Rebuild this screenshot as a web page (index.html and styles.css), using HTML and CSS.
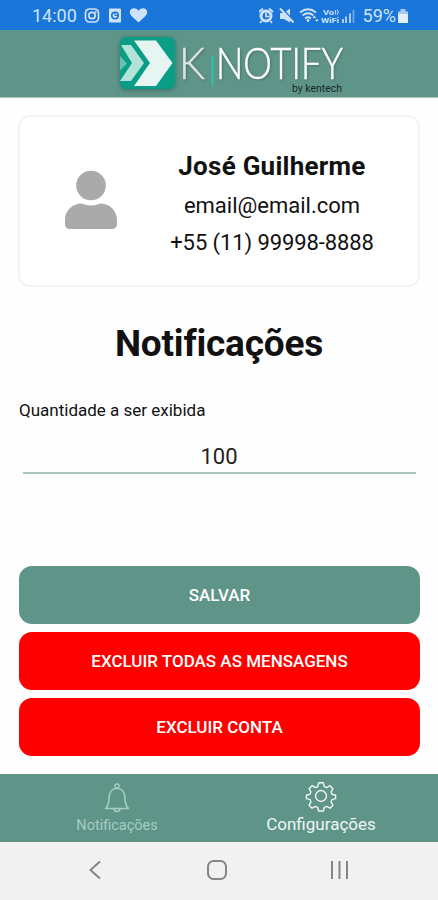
FILE: index.html
```
<!DOCTYPE html>
<html lang="pt-BR">
<head>
    <meta charset="utf-8">
    <title>K|Notify</title>
    <link rel="stylesheet" href="styles.css">
</head>
<body>
    <div class="status-bar">
        <span class="clock">14:00</span>
        <svg class="status-left" width="64" height="18" viewBox="0 0 64 18">
            <g fill="none" stroke="#cfe2fa" stroke-width="1.7">
                <rect x="1.5" y="2" width="13" height="13" rx="4"/>
                <circle cx="8" cy="8.5" r="3.2"/>
            </g>
            <circle cx="11.8" cy="4.8" r="1" fill="#cfe2fa"/>
            <rect x="25" y="1.5" width="12" height="14" rx="1" fill="#cfe2fa"/>
            <circle cx="31" cy="8.5" r="3.2" fill="none" stroke="#1976d8" stroke-width="1.6"/>
            <path d="M31 8.5V5.5M31 8.5h3" stroke="#1976d8" stroke-width="1.2"/>
            <path d="M54.500 15.500L47.500 9C44 5 46.500 1.200 50 1.200c2.200 0 3.500 1 4.500 2.600 1-1.600 2.300-2.600 4.500-2.600 3.500 0 6 3.800 2.500 7.800z" fill="#cfe2fa"/>
        </svg>
        <svg class="status-right" width="98" height="18" viewBox="0 0 98 18">
            <circle cx="7" cy="9" r="5" fill="none" stroke="#cfe2fa" stroke-width="3"/>
            <path d="M0 5l4-3.500M14 5l-4-3.500M2.500 14L1 16M11.500 14l1.500 2M7 6v3.500h3" fill="none" stroke="#cfe2fa" stroke-width="1.7"/>
            <path d="M21 6h4l6-4.500v14L25 12h-4z" fill="#cfe2fa"/>
            <path d="M22 .5l13 14" stroke="#1976d8" stroke-width="2"/>
            <path d="M21 1.500l13.500 14" stroke="#cfe2fa" stroke-width="2"/>
            <g fill="none" stroke="#cfe2fa" stroke-width="1.7">
                <path d="M41 5.500q8-6.500 16 0M43.500 8.500q5.500-4.500 11 0M46 11.500q3-2.500 6 0"/>
            </g>
            <circle cx="49" cy="13.500" r="1.400" fill="#cfe2fa"/>
            <path d="M53.500 11l1.800-2.500 1.800 2.500zM56 12.500h3.600L57.800 15z" fill="#cfe2fa"/>
            <text class="vo-text" x="64" y="8" textLength="11" lengthAdjust="spacingAndGlyphs">Vo</text>
            <path d="M76 3q1.500 2 0 4.500M78.200 2.500q2 2.500 0 5.500" fill="none" stroke="#cfe2fa"/>
            <text class="vo-text" x="62" y="15.500" textLength="18" lengthAdjust="spacingAndGlyphs">WiFi</text>
            <g fill="#a9caf2">
                <rect x="83" y="12" width="2" height="4"/>
                <rect x="86" y="9.500" width="2" height="6.500"/>
                <rect x="90" y="6.500" width="2" height="9.500"/>
            </g>
            <path d="M94.500 3v13" stroke="#6fa8ea" stroke-width="1.8"/>
        </svg>
        <span class="battery">59%</span>
        <svg width="12" height="18" viewBox="0 0 12 18">
            <path d="M3.500 2h5v2.500H11V15q0 1-1 1H2q-1 0-1-1V4.500h2.500z" fill="#a9caf2"/>
            <path d="M1 7h10v8q0 1-1 1H2q-1 0-1-1z" fill="#e4effc"/>
        </svg>
    </div>

    <div class="header">
        <svg class="logo" width="238" height="66" viewBox="0 0 238 66">
            <defs>
                <clipPath id="mark"><rect x="10" y="7" width="55" height="52" rx="6"/></clipPath>
            </defs>
            <rect class="logo-mark" x="10" y="7" width="55" height="52" rx="6"/>
            <g clip-path="url(#mark)">
                <path d="M10 26l7 7.500-7 7z" fill="#66c3b0"/>
                <path d="M11 15h10l13 18-13 18H10l12-18z" fill="#b3e2d9"/>
                <path d="M24 10.500h22l16.500 22.500L46 56H24l16-23z" fill="#e6f5f2"/>
            </g>
            <text class="logo-k" x="69" y="49" textLength="26" lengthAdjust="spacingAndGlyphs">K</text>
            <rect x="101.500" y="26" width="2" height="29" fill="#2fc4ab"/>
            <text class="logo-text" x="106" y="49" textLength="127" lengthAdjust="spacingAndGlyphs">NOTIFY</text>
            <text class="logo-by" x="182" y="62" textLength="50" lengthAdjust="spacingAndGlyphs">by kentech</text>
        </svg>
    </div>

    <div class="content">
        <div class="user-card">
            <svg class="avatar" width="52" height="60" viewBox="0 0 52 60">
                <circle cx="26" cy="15.500" r="14.800"/>
                <path d="M0 54V50C0 40 8 33.500 16.500 33.500q9.500 4 19 0C44 33.500 52 40 52 50v4q0 5-5 5H5q-5 0-5-5z"/>
            </svg>
            <div class="user-info">
                <div class="user-name">José Guilherme</div>
                <div class="user-email">email@email.com</div>
                <div class="user-phone">+55 (11) 99998-8888</div>
            </div>
        </div>

        <h1>Notificações</h1>

        <label for="quantity">Quantidade a ser exibida</label>
        <input id="quantity" class="quantity" type="text" value="100">

        <div class="buttons">
            <button class="btn save">SALVAR</button>
            <button class="btn delete">EXCLUIR TODAS AS MENSAGENS</button>
            <button class="btn delete">EXCLUIR CONTA</button>
        </div>
    </div>

    <div class="tabs">
        <div class="tab tab-notifications">
            <svg width="30" height="32" viewBox="0 0 30 32">
                <circle cx="15" cy="4" r="2"/>
                <path d="M3.500 26.500c3-3 3.500-5 3.500-10C7 10 9.500 6.500 15 6.500S23 10 23 16.500c0 5 .5 7 3.500 10zM12 26.500c0 4 6 4 6 0"/>
            </svg>
            <span>Notificações</span>
        </div>
        <div class="tab tab-settings">
            <svg width="32" height="32" viewBox="-1 -1 34 34">
                <circle cx="16" cy="16" r="5.800"/>
                <path d="M13.500 2h5l1 4 2.500 1 3.500-2 3.200 3.200-2 3.600 1 2.400 3.800 1v3.600l-3.800 1-1 2.400 2 3.600-3.200 3.200-3.500-2-2.500 1-1 4h-5l-1-4-2.500-1-3.500 2-3.200-3.200 2-3.600-1-2.400-3.800-1v-3.600l3.800-1 1-2.400-2-3.600L6.500 5 10 7l2.500-1z"/>
            </svg>
            <span>Configurações</span>
        </div>
    </div>

    <div class="system-nav">
        <svg width="438" height="58" viewBox="0 0 438 58">
            <path d="M100 19.500l-9.500 8.500 9.500 8.500"/>
            <rect x="208" y="19" width="18" height="18" rx="5.500"/>
            <path d="M332 19v18M339.500 19v18M347 19v18"/>
        </svg>
    </div>
</body>
</html>
```
FILE: styles.css
```
* {
    box-sizing: border-box;
}

body {
    margin: 0;
    height: 900px;
    display: flex;
    flex-direction: column;
    overflow: hidden;
    background: #fefefe;
    color: #111;
    font-family: Roboto, sans-serif;
}

.status-bar {
    display: flex;
    align-items: center;
    height: 30px;
    padding: 1px 29px 0 32px;
    background: #1976d8;
    color: #cfe2fa;
    font-size: 18px;
}

.status-left {
    margin-left: 7px;
}

.status-right {
    margin-left: auto;
    margin-right: 6px;
}

.battery {
    margin-right: 1px;
}

.vo-text {
    fill: #cfe2fa;
    font-size: 8px;
    font-weight: bold;
}

.header {
    display: flex;
    justify-content: center;
    height: 68px;
    padding-left: 20px;
    background: #5f9489;
    border-bottom: 1px solid #a9c3bd;
}

.logo {
    overflow: visible;
}

.logo-mark {
    fill: #0b9e86;
    filter: drop-shadow(0 1px 2px #3d6b62);
}

.logo-k, .logo-text {
    font-family: Lato, sans-serif;
    font-weight: 300;
    font-size: 44px;
    fill: #fff;
    stroke: #fff;
    stroke-width: 0.5;
    filter: drop-shadow(1px 1px 1px #48756c);
}

.logo-k {
    fill: #e1e3e2;
    stroke: #e1e3e2;
}

.logo-by {
    font-size: 10.5px;
    fill: #142b26;
}

.content {
    flex: 1;
    padding: 17px 18px 0;
}

.user-card {
    display: flex;
    height: 172px;
    padding: 0 46px;
    border: 2px solid #f3f3f3;
    border-radius: 12px;
    background: #fff;
}

.avatar {
    flex: none;
    margin-top: 53px;
    margin-left: -1px;
    fill: #aaa;
}

.user-info {
    flex: none;
    width: 204px;
    margin: 29px 0 0 53px;
    display: flex;
    flex-direction: column;
    align-items: center;
    white-space: nowrap;
}

.user-name {
    font-size: 26px;
    font-weight: bold;
    letter-spacing: 0.25px;
    line-height: 40px;
}

.user-email, .user-phone {
    font-size: 22px;
    line-height: 37px;
}

.user-email {
    padding-top: 1px;
}

.user-phone {
    letter-spacing: -0.1px;
}

h1 {
    margin: 34px 0 0;
    font-size: 37px;
    letter-spacing: -0.2px;
    line-height: 46px;
    text-align: center;
}

label {
    display: block;
    margin: 32px 0 0 1px;
    font-size: 17px;
    line-height: 22px;
}

.quantity {
    display: block;
    width: 393px;
    height: 36px;
    margin: 17px auto 0;
    padding: 2px 0 0;
    border: 0;
    border-bottom: 2px solid #a9c5be;
    background: none;
    color: #222;
    font-family: inherit;
    font-size: 22px;
    text-align: center;
    outline: none;
}

.buttons {
    display: flex;
    flex-direction: column;
    gap: 8px;
    margin: 92px 0 0 1px;
}

.btn {
    height: 58px;
    border: 0;
    border-radius: 13px;
    color: #fff;
    font-family: inherit;
    font-size: 17px;
    font-weight: 500;
}

.save {
    background: #5f9489;
}

.delete {
    background: #ff0000;
}

.tabs {
    display: flex;
    height: 68px;
    padding: 0 15px;
    background: #5f9489;
}

.tab {
    flex: 1;
    display: flex;
    flex-direction: column;
    align-items: center;
    gap: 2px;
    padding-top: 6px;
}

.tab svg {
    fill: none;
    stroke: currentColor;
    stroke-width: 1.5;
    stroke-linejoin: round;
}

.tab-notifications {
    gap: 3px;
    padding-top: 8px;
    color: #a5cec4;
    font-size: 14.5px;
}

.tab-settings {
    color: #eef6f4;
    font-size: 17px;
}

.system-nav {
    height: 58px;
    background: #f1f1f1;
}

.system-nav svg {
    display: block;
    fill: none;
    stroke: #858585;
    stroke-width: 2;
}
```
